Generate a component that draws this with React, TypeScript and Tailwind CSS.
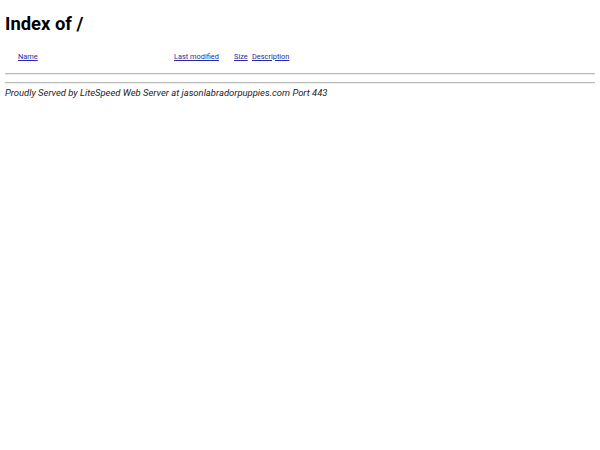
export default function App() {
  return (
    <div className="min-h-[450px] bg-white px-[5px] pt-[13px] font-['Roboto',sans-serif] text-black">
      <h1 className="text-[18.4px] font-bold leading-[22px]">Index of /</h1>

      <div className="mt-[16px] flex h-[12px] items-center text-[7.4px] leading-[12px] text-[#2a2aa8]">
        <span className="w-[13px]" />
        <a href="#" className="w-[156px] underline">Name</a>
        <a href="#" className="w-[60px] underline">Last modified</a>
        <a href="#" className="w-[18px] underline">Size</a>
        <a href="#" className="underline">Description</a>
      </div>

      <div className="mt-[10px] h-[2px] border-t border-b border-t-[#bbb] border-b-[#eee]" />
      <div className="mt-[7px] h-[2px] border-t border-b border-t-[#bbb] border-b-[#eee]" />

      <address className="mt-[3px] text-[9.45px] italic leading-[12px] text-[#222]">
        Proudly Served by LiteSpeed Web Server at jasonlabradorpuppies.com Port 443
      </address>
    </div>
  );
}
